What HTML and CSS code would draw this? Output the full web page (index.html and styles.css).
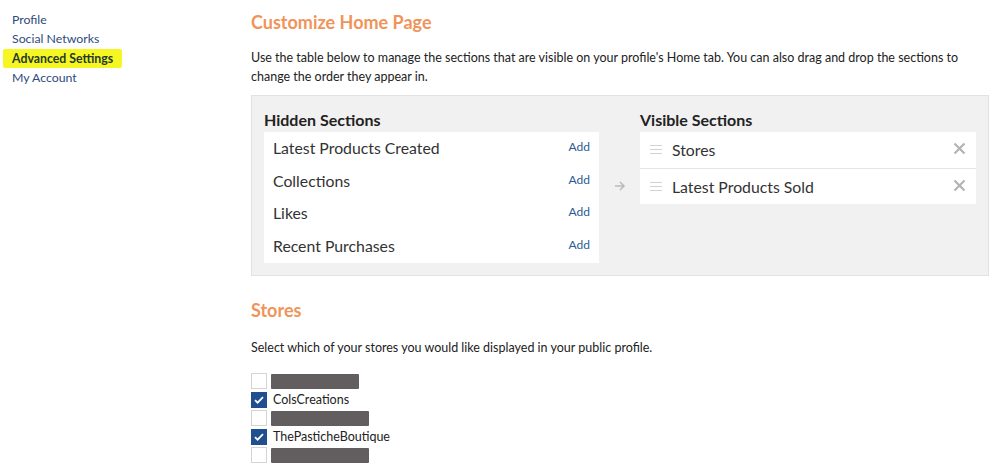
FILE: index.html
```html
<!DOCTYPE html>
<html>
<head>
<meta charset="utf-8">
<link rel="stylesheet" href="styles.css">
</head>
<body>
<div class="layout">
  <nav class="sidebar">
    <a class="nav-link" href="#">Profile</a>
    <a class="nav-link" href="#">Social Networks</a>
    <a class="nav-link active" href="#">Advanced Settings</a>
    <a class="nav-link" href="#">My Account</a>
  </nav>
  <main class="main">
    <h2 class="title">Customize Home Page</h2>
    <p class="desc">Use the table below to manage the sections that are visible on your profile's Home tab. You can also drag and drop the sections to change the order they appear in.</p>
    <div class="sections-box">
      <div class="col hidden-col">
        <h3 class="col-title">Hidden Sections</h3>
        <ul class="list hidden-list">
          <li class="row"><span>Latest Products Created</span><a class="add" href="#">Add</a></li>
          <li class="row"><span>Collections</span><a class="add" href="#">Add</a></li>
          <li class="row"><span>Likes</span><a class="add" href="#">Add</a></li>
          <li class="row"><span>Recent Purchases</span><a class="add" href="#">Add</a></li>
        </ul>
      </div>
      <div class="arrow-col">
        <svg class="arrow" width="12" height="10" viewBox="0 0 12 10"><path d="M1 5h9M6 1l4 4-4 4" fill="none" stroke="#bbb" stroke-width="1.6"/></svg>
      </div>
      <div class="col visible-col">
        <h3 class="col-title">Visible Sections</h3>
        <ul class="list visible-list">
          <li class="vrow">
            <svg class="handle" width="12" height="9" viewBox="0 0 12 9"><path d="M0 .5h12M0 4.5h12M0 8.5h12" stroke="#d3d3d3" stroke-width="1"/></svg>
            <span class="vname">Stores</span>
            <svg class="close" width="13" height="13" viewBox="0 0 13 13"><path d="M1.5 1.5l10 10M11.5 1.5l-10 10" stroke="#b3b3b3" stroke-width="2.2"/></svg>
          </li>
          <li class="vrow">
            <svg class="handle" width="12" height="9" viewBox="0 0 12 9"><path d="M0 .5h12M0 4.5h12M0 8.5h12" stroke="#d3d3d3" stroke-width="1"/></svg>
            <span class="vname">Latest Products Sold</span>
            <svg class="close" width="13" height="13" viewBox="0 0 13 13"><path d="M1.5 1.5l10 10M11.5 1.5l-10 10" stroke="#b3b3b3" stroke-width="2.2"/></svg>
          </li>
        </ul>
      </div>
    </div>

    <h2 class="title stores-title">Stores</h2>
    <p class="desc stores-desc">Select which of your stores you would like displayed in your public profile.</p>
    <ul class="stores">
      <li class="store"><span class="cb"></span><span class="redact" style="width:88px"></span></li>
      <li class="store"><span class="cb checked"><svg width="10" height="8" viewBox="0 0 10 8"><path d="M1 4.2l2.6 2.5L9 1.2" fill="none" stroke="#fff" stroke-width="1.8"/></svg></span><span class="store-name">ColsCreations</span></li>
      <li class="store"><span class="cb"></span><span class="redact" style="width:98px"></span></li>
      <li class="store"><span class="cb checked"><svg width="10" height="8" viewBox="0 0 10 8"><path d="M1 4.2l2.6 2.5L9 1.2" fill="none" stroke="#fff" stroke-width="1.8"/></svg></span><span class="store-name">ThePasticheBoutique</span></li>
      <li class="store"><span class="cb"></span><span class="redact" style="width:98px"></span></li>
    </ul>
  </main>
</div>
</body>
</html>
```

FILE: styles.css
```css
* { box-sizing: border-box; }
html, body { margin: 0; padding: 0; background: #fff; }
body {
  font-family: Lato, "Liberation Sans", Arial, sans-serif;
  color: #222;
  width: 999px;
  height: 474px;
  overflow: hidden;
}
.layout { display: flex; }
.sidebar {
  width: 251px;
  flex: none;
  padding: 10px 0 0 3px;
  display: flex;
  flex-direction: column;
  align-items: flex-start;
}
.nav-link {
  font-size: 12.3px;
  line-height: 19.3px;
  color: #2d4b7c;
  text-decoration: none;
  padding: 0 9px;
}
.nav-link.active {
  background: #f6f623;
  color: #1f3a2a;
  font-weight: bold;
  border-radius: 2px;
}
.main {
  width: 738px;
  flex: none;
}
.title {
  margin: 12px 0 0;
  font-size: 18px;
  line-height: 20px;
  font-weight: bold;
  color: #f0945a;
}
.desc {
  margin: 16px 0 0;
  font-size: 12.5px;
  line-height: 19px;
  color: #222;
}
.sections-box {
  margin-top: 9px;
  height: 181px;
  background: #f1f1f1;
  border: 1px solid #e2e2e2;
  padding: 14px 12px 0 12px;
  display: flex;
}
.col { width: 336px; flex: none; }
.hidden-col { width: 335px; }
.col-title {
  margin: 0 0 2px;
  font-size: 16px;
  line-height: 20px;
  font-weight: bold;
  color: #222;
}
.list { list-style: none; margin: 0; padding: 0; background: #fff; }
.row {
  height: 32.75px;
  display: flex;
  align-items: center;
  justify-content: space-between;
  padding: 0 9px 2px;
  font-size: 15.8px;
  color: #333;
}
.add {
  font-size: 12px;
  color: #2b5b93;
  text-decoration: none;
  margin-top: -2px;
}
.arrow-col {
  width: 41px;
  flex: none;
  padding-top: 71px;
  padding-left: 15px;
}
.arrow { display: block; }
.vrow {
  height: 36px;
  display: flex;
  align-items: center;
  padding: 0 10px 1px;
  font-size: 15.8px;
  color: #333;
}
.vrow + .vrow { border-top: 1px solid #e6e6e6; }
.handle { flex: none; margin-right: 10px; }
.vname { flex: 1; }
.close { flex: none; margin-right: 0; margin-top: -2px; }
.stores-title { margin-top: 24px; }
.stores-desc { margin-top: 18px; }
.stores { list-style: none; margin: 15px 0 0; padding: 0; }
.store {
  height: 18.5px;
  display: flex;
  align-items: center;
}
.cb {
  width: 16px;
  height: 16px;
  border: 1px solid #d4d4d4;
  background: #fff;
  display: flex;
  align-items: center;
  justify-content: center;
  flex: none;
}
.cb.checked { background: #1f4f8f; border-color: #1f4f8f; }
.store-name { margin-left: 6px; font-size: 12.5px; color: #222; }
.redact {
  margin-left: 4px;
  height: 15px;
  background: #625e5f;
  border-radius: 1px;
}
```
